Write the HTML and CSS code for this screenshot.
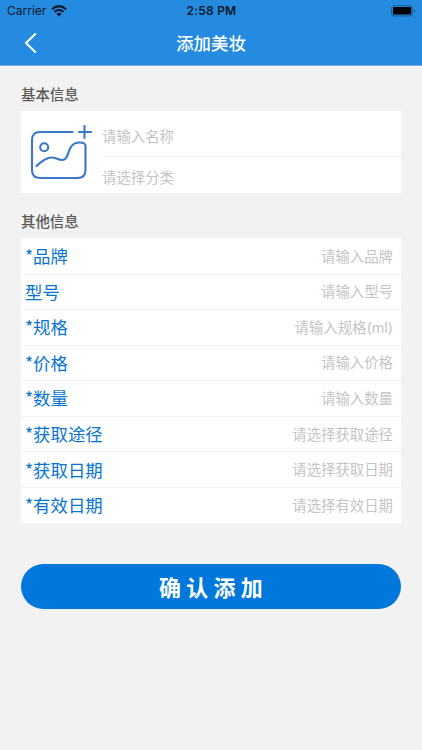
FILE: index.html
```
<!DOCTYPE html>
<html lang="zh-CN">
<head>
<meta charset="utf-8">
<meta name="viewport" content="width=device-width, initial-scale=1">
<title>添加美妆</title>
<link rel="stylesheet" href="styles.css">
</head>
<body>
<header class="top">
  <div class="status">
    <div class="carrier"><span>Carrier</span>
      <svg width="16" height="12" viewBox="0 0 16 12" fill="none" stroke="#06182b" stroke-width="2.1"><path d="M1 4.2Q8-1.9 15 4.2M3.5 6.9Q8 3.1 12.5 6.9"/><path d="M5.4 8.7Q8 6.7 10.6 8.7L8 11.4Z" fill="#06182b" stroke="none"/></svg>
    </div>
    <div class="time">2:58 PM</div>
    <svg class="battery" width="25" height="12" viewBox="0 0 25 12"><rect x=".6" y=".6" width="21" height="10.3" rx="2.6" fill="none" stroke="#145a99"/><rect x="2" y="2" width="18.2" height="7.5" rx="1.2" fill="#000"/><path d="M23 4v3.6q1.2-.5 1.2-1.8T23 4Z" fill="#145a99"/></svg>
  </div>
  <nav class="nav">
    <svg class="back" width="14" height="22" viewBox="0 0 14 22" fill="none" stroke="#fff" stroke-width="2"><path d="M11.8 1.5 2 11l9.8 9.5"/></svg>
    <h1>添加美妆</h1>
  </nav>
</header>
<main class="content">
  <h2>基本信息</h2>
  <section class="basic">
    <svg class="photo" width="62" height="55" viewBox="0 0 62 55" fill="none" stroke="#3a78c7" stroke-width="2.1" stroke-linecap="round"><path d="M42.500 7H10Q2 7 2 15v30q0 8 8 8h37.500q8 0 8-8V20.500c0-4-12-5-15.500 3-2.500 6-3 11.500-8 11.500-4 0-6-2.500-10.500-2.500-5.500 0-10 4-15 8.500"/><circle cx="14.200" cy="22.300" r="4"/><path d="M49 7h12M54.500 1v12"/></svg>
    <div class="fields">
      <div class="field name">请输入名称</div>
      <div class="field">请选择分类</div>
    </div>
  </section>
  <h2 class="other">其他信息</h2>
  <section class="list">
    <div class="row"><label>*品牌</label><span>请输入品牌</span></div>
    <div class="row"><label>型号</label><span>请输入型号</span></div>
    <div class="row"><label>*规格</label><span>请输入规格(ml)</span></div>
    <div class="row"><label>*价格</label><span>请输入价格</span></div>
    <div class="row"><label>*数量</label><span>请输入数量</span></div>
    <div class="row"><label>*获取途径</label><span>请选择获取途径</span></div>
    <div class="row"><label>*获取日期</label><span>请选择获取日期</span></div>
    <div class="row"><label>*有效日期</label><span>请选择有效日期</span></div>
  </section>
  <button class="submit" type="button">确认添加</button>
</main>
</body>
</html>
```
FILE: styles.css
```
* { box-sizing: border-box; }
body {
  margin: 0;
  min-height: 750px;
  background: #f2f2f2;
  font-family: "Noto Sans CJK SC", sans-serif;
}
.top {
  height: 66px;
  background: #258be0;
  border-bottom: 1px solid #78afe0;
}
.status {
  height: 22px;
  display: grid;
  grid-template-columns: 1fr auto 1fr;
  align-items: center;
  padding: 0 6px 0 7px;
  font: 12px/22px Inter, sans-serif;
  color: #06182b;
}
.carrier { display: flex; align-items: center; gap: 5px; }
.time { font-weight: 600; letter-spacing: .2px; }
.battery { justify-self: end; }
.nav {
  height: 42px;
  display: grid;
  grid-template-columns: 1fr auto 1fr;
  align-items: center;
}
.back { margin-left: 24px; }
h1 {
  grid-column: 2;
  margin: 0;
  font-size: 17.4px;
  font-weight: 500;
  line-height: 42px;
  color: #fff;
}
.content { padding: 17px 21px 0; }
h2 {
  margin: 0;
  font-size: 14.4px;
  font-weight: 500;
  line-height: 21px;
  height: 28px;
  color: #585858;
}
.basic {
  height: 82px;
  display: flex;
  background: #fff;
}
.photo { margin: 14px 10px 0 9px; flex: none; }
.fields { flex: 1; }
.field {
  height: 36px;
  font-size: 14.4px;
  line-height: 40px;
  color: #c4c4c8;
}
.name { height: 46px; line-height: 50px; border-bottom: 1px solid #f0f0f0; }
.other { margin-top: 17px; }
.list { padding-top: 1px; background: #fff; }
.row {
  height: 35.55px;
  padding: 0 8px 0 4px;
  display: flex;
  justify-content: space-between;
  align-items: center;
  border-bottom: 1px solid #f2f2f2;
}
.row:last-child { border-bottom-color: #fff; }
.row label { font-size: 17.4px; line-height: 34px; color: #0874d2; }
.row span { padding-top: 1px; font: 14.4px/34px Inter, "Noto Sans CJK SC", sans-serif; color: #c4c4c8; }
.submit {
  display: block;
  width: 100%;
  height: 45px;
  margin-top: 41px;
  padding: 0 0 0 5px;
  border: 0;
  border-radius: 23px;
  background: #0078db;
  color: #fff;
  font: 700 22px/45px "Noto Sans CJK SC", sans-serif;
  letter-spacing: 5.2px;
}
```
